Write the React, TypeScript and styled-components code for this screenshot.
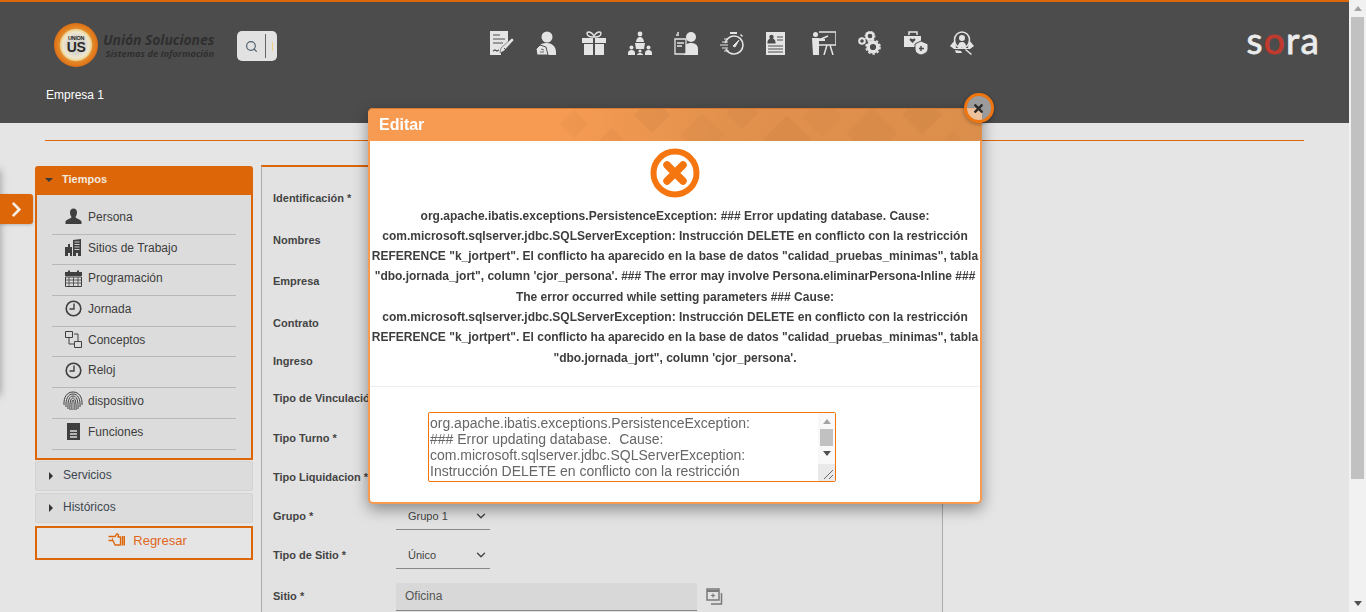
import React from 'react';
import styled, { createGlobalStyle } from 'styled-components';
import { ChevronDown, Search } from 'lucide-react';
import { FaTimes, FaChevronRight } from 'react-icons/fa';

const Global = createGlobalStyle`
  html, body { height: 100%; overflow: hidden; background: #e5e5e5; }
  body { margin: 0; font-family: "Liberation Sans", Arial, sans-serif; }
`;

const Shell = styled.div`
  display: flex;
  height: 612px;
  overflow: hidden;
`;
const Page = styled.div`
  flex: 1;
  min-width: 0;
  position: relative;
  overflow: hidden;
`;
const ScrollTrack = styled.div`
  width: 17px;
  flex: none;
  background: #f1f1f1;
  display: flex;
  flex-direction: column;
  align-items: center;
  justify-content: space-between;
  padding: 6px 0;
  box-sizing: border-box;
  position: relative;
`;
const ArrowUp = styled.span`
  display: block;
  width: 0;
  height: 0;
  border: 4px solid transparent;
  border-top: 0;
  border-bottom: 5px solid #a3a3a3;
`;
const ArrowDown = styled.span`
  display: block;
  width: 0;
  height: 0;
  border: 4px solid transparent;
  border-bottom: 0;
  border-top: 5px solid #505050;
`;
const ScrollThumb = styled.div`
  position: absolute;
  left: 2px;
  right: 2px;
  top: 17px;
  height: 462px;
  background: #c1c1c1;
`;
const Header = styled.header`
  height: 121px;
  background: #4c4c4c;
  border-top: 2px solid #dd6608;
  position: relative;
`;
const HeaderTop = styled.div`
  display: flex;
  align-items: flex-start;
  padding: 21px 29px 0 54px;
`;
const Logo = styled.div`
  display: flex;
  align-items: center;
  width: 183px;
  height: 44px;
  flex: none;
`;
const LogoMark = styled.div`
  width: 44px;
  height: 44px;
  border-radius: 50%;
  flex: none;
  background: radial-gradient(circle closest-side, #d9d5cc 0 40%, #efe6cf 58%, #ecd596 70%, #e48a2a 76%, #dd6f14 100%);
  display: flex;
  flex-direction: column;
  align-items: center;
  justify-content: center;
  color: #2a2a2a;
  font-weight: 700;
  line-height: 1;
`;
const MarkSmall = styled.span`
  font-size: 5.500px;
  letter-spacing: -0.3px;
`;
const MarkBig = styled.span`
  font-size: 14px;
  letter-spacing: -0.5px;
  margin-top: -1px;
`;
const LogoText = styled.div`
  margin-left: 5px;
  font-family: "Open Sans", sans-serif;
  font-style: italic;
  font-weight: 700;
  color: #2f2f2f;
  white-space: nowrap;
  text-align: right;
`;
const LogoTitle = styled.div`
  font-size: 14px;
  line-height: 16px;
  letter-spacing: -0.1px;
`;
const LogoSub = styled.div`
  font-size: 9.300px;
  line-height: 11px;
`;
const SearchBox = styled.div`
  width: 40px;
  height: 30px;
  margin-top: 8px;
  background: #e2e2e2;
  border-radius: 5px;
  display: flex;
  align-items: center;
  padding-left: 8px;
  box-sizing: border-box;
  color: #50606e;
  flex: none;
`;
const SearchDivider = styled.span`
  width: 1px;
  height: 24px;
  background: #666;
  margin-left: 7px;
`;
const SearchCaret = styled.span`
  width: 1px;
  height: 9px;
  background: #edd089;
  margin-left: 6px;
`;
const NavIcons = styled.nav`
  display: flex;
  gap: 22px;
  margin-left: 213px;
  margin-top: 8px;
`;
const NavIcon = styled.svg`
  width: 24px;
  height: 24px;
  fill: #e4e4e4;
  display: block;
  filter: blur(0.3px);
`;
const Sora = styled.div`
  margin-left: auto;
  margin-top: -3px;
  font-family: "Lato", sans-serif;
  font-size: 37px;
  line-height: 40px;
  font-weight: 400;
  letter-spacing: 1.200px;
  color: #ececec;
  -webkit-text-stroke: 0.8px #ececec;
`;
const SoraO = styled.span`
  color: #c23a2e;
  -webkit-text-stroke: 0.8px #c23a2e;
`;
const Company = styled.div`
  position: absolute;
  left: 46px;
  top: 86px;
  color: #fff;
  font-size: 12px;
  line-height: 14px;
`;
const Rule = styled.hr`
  border: 0;
  height: 1px;
  background: #dd6608;
  margin: 17px 45px 0;
`;
const Content = styled.main`
  display: flex;
  align-items: flex-start;
  gap: 8px;
  padding: 24px 0 0 35px;
`;
const Sidebar = styled.aside`
  width: 218px;
  flex: none;
  margin-top: 1px;
`;
const OpenPanel = styled.section`
  border-radius: 3px 3px 0 0;
`;
const OpenHead = styled.div`
  height: 29px;
  background: #dd6608;
  border-radius: 3px 3px 0 0;
  display: flex;
  align-items: center;
  padding: 0 0 3px 10px;
  box-sizing: border-box;
  color: #f4e9df;
  font-size: 11px;
  font-weight: 700;
`;
const CaretDown = styled.span`
  width: 0;
  height: 0;
  border: 4px solid transparent;
  border-top-color: #3a3a3a;
  border-bottom: 0;
  margin: 2px 9px 0 0;
`;
const OpenBody = styled.div`
  background: #dcdcdc;
  border: 2px solid #dd6608;
  border-top: 0;
  padding: 9px 15px 10px;
  height: 265px;
  box-sizing: border-box;
`;
const Item = styled.div`
  height: 30.700px;
  box-sizing: border-box;
  border-bottom: 1px solid #b8b8b8;
  display: flex;
  align-items: center;
  color: #3d3d3d;
  font-size: 12px;
  padding-bottom: 4px;
`;
const ItemIcon = styled.span`
  width: 36px;
  display: flex;
  justify-content: center;
  padding-left: 6px;
  box-sizing: border-box;
  color: #3f3f3f;
`;
const ItemSvg = styled.svg`
  width: 17px;
  height: 17px;
  display: block;
`;
const PrintSvg = styled.svg`
  width: 20px;
  height: 20px;
  display: block;
  fill: none;
  stroke: #3f3f3f;
  stroke-width: 1;
`;
const ClosedPanel = styled.div`
  height: 30px;
  margin-top: ${p => p.$gap}px;
  background: #dcdcdc;
  border: 1px solid #d3d3d3;
  border-radius: 2px;
  box-sizing: border-box;
  display: flex;
  align-items: center;
  padding: 0 0 2px 13px;
  font-size: 12px;
  color: #3d4750;
`;
const CaretRight = styled.span`
  width: 0;
  height: 0;
  border: 4px solid transparent;
  border-left-color: #333;
  border-right: 0;
  margin-right: 10px;
  margin-top: 2px;
`;
const BackButton = styled.div`
  height: 34px;
  margin-top: 3px;
  border: 2px solid #dd6608;
  box-sizing: border-box;
  display: flex;
  align-items: center;
  justify-content: center;
  gap: 8px;
  color: #e0661c;
  font-size: 13px;
  padding: 0 0 6px 7px;
`;
const HandIcon = styled.svg`
  width: 17px;
  height: 14px;
  fill: none;
  stroke: #dd6608;
  stroke-width: 1.300;
`;
const FormPanel = styled.section`
  width: 682px;
  height: 460px;
  background: #e2e2e2;
  border-top: 2px solid #dd6608;
  border-left: 1px solid #aaa;
  border-right: 1px solid #aaa;
  box-sizing: border-box;
  padding: 10px 0 0 11px;
`;
const Row = styled.div`
  height: ${p => p.$h}px;
  display: flex;
  align-items: center;
`;
const Label = styled.label`
  width: 123px;
  flex: none;
  font-size: 11px;
  font-weight: 700;
  color: #444;
  white-space: nowrap;
`;
const SelectBox = styled.div`
  width: 94px;
  height: 27px;
  margin-top: 1px;
  border-bottom: 1px solid #888;
  box-sizing: border-box;
  display: flex;
  align-items: center;
  justify-content: space-between;
  padding: 0 2px 0 12px;
  font-size: 11px;
  color: #444;
`;
const Input = styled.div`
  width: 301px;
  height: 28px;
  margin-top: 1px;
  background: #d8d8d8;
  border-bottom: 1px solid #888;
  box-sizing: border-box;
  display: flex;
  align-items: center;
  padding-left: 9px;
  font-size: 12px;
  color: #555;
  border-radius: 2px 2px 0 0;
`;
const AddIcon = styled.svg`
  width: 17px;
  height: 17px;
  margin-left: 9px;
  fill: none;
  stroke: #7a7a7a;
`;
const SideTab = styled.div`
  position: absolute;
  left: 0;
  top: 194px;
  width: 33px;
  height: 30px;
  background: #dd6608;
  border-radius: 0 3px 3px 0;
  display: flex;
  align-items: center;
  justify-content: center;
  color: #f6efe8;
  box-shadow: 0 1px 3px rgba(0,0,0,.2);
`;
const OffCanvas = styled.div`
  position: absolute;
  left: -200px;
  top: 170px;
  width: 200px;
  height: 225px;
  box-shadow: 0 0 8px rgba(0,0,0,.35);
`;
const Modal = styled.div`
  position: fixed;
  left: 368px;
  top: 108px;
  width: 614px;
  height: 396px;
  background: #fff;
  border: 2px solid #f79b53;
  border-top: 0;
  border-radius: 5px;
  box-sizing: border-box;
  box-shadow: 0 5px 15px rgba(0,0,0,.4);
`;
const ModalHead = styled.div`
  height: 33px;
  margin: 0 -2px;
  background: #f79b53;
  border-top: 1px solid #d97a32;
  border-radius: 5px 5px 0 0;
  box-sizing: border-box;
  position: relative;
  overflow: hidden;
  color: #fff;
  font-size: 16px;
  font-weight: 700;
  line-height: 31px;
  padding-left: 11px;
`;
const HeadPattern = styled.svg`
  position: absolute;
  right: 0;
  top: 0;
  width: 430px;
  height: 32px;
`;
const Close = styled.button`
  position: absolute;
  right: -14px;
  top: -15px;
  width: 30px;
  height: 30px;
  padding: 1px 2px 0 0;
  border-radius: 50%;
  border: 3px solid #f0750f;
  background: rgba(255,255,255,.45);
  box-shadow: 0 1px 4px rgba(0,0,0,.35);
  color: #2a2a2a;
  display: flex;
  align-items: center;
  justify-content: center;
  box-sizing: border-box;
`;
const ErrorIcon = styled.svg`
  display: block;
  width: 50px;
  height: 50px;
  margin: 7px auto 0;
`;
const Message = styled.p`
  margin: 7.500px 0 0;
  font-size: 12px;
  line-height: 20.300px;
  font-weight: 700;
  text-align: center;
  color: #3d3d3d;
`;
const Divider = styled.hr`
  border: 0;
  height: 1px;
  background: #eeeeee;
  margin: 18.500px 0 0;
`;
const DetailsWrap = styled.div`
  position: relative;
  width: 408px;
  height: 70px;
  margin: 25px 0 0 58px;
`;
const Details = styled.textarea`
  display: block;
  width: 100%;
  height: 100%;
  box-sizing: border-box;
  border: 1px solid #f0750f;
  border-radius: 2px;
  padding: 2px 18px 1px 1px;
  font-family: "Liberation Sans", Arial, sans-serif;
  font-size: 14px;
  line-height: 16px;
  color: #666;
  outline: none;
  overflow: hidden;
  resize: none;
`;
const MiniTrack = styled.div`
  position: absolute;
  right: 1px;
  top: 1px;
  bottom: 1px;
  width: 17px;
  background: #f8f8f8;
  display: flex;
  flex-direction: column;
  align-items: center;
  padding-top: 6px;
  box-sizing: border-box;
`;
const MiniThumb = styled.div`
  width: 13px;
  height: 17px;
  margin: 5px 0 5px;
  background: #c1c1c1;
`;
const Grip = styled.svg`
  position: absolute;
  right: 0;
  bottom: 0;
  width: 17px;
  height: 17px;
  background: #e9e9e9;
  stroke: #6a6a6a;
`;

const navIcons = [
  <><path d="M0 0h18v13l-7 7v4H0z"/><path d="M3 4h7M3 8h12M3 12h10M3 20l2-1 2 1 2-1" stroke="#4c4c4c" strokeWidth="1.2" fill="none"/><path d="M22 7l2 2-10 11-4 2 1-5z" stroke="#4c4c4c" strokeWidth=".6"/><path d="M14 17l3 3" stroke="#4c4c4c" strokeWidth="1"/></>,
  <><circle cx="11" cy="6" r="5.500"/><path d="M4 24v-9c0-2 3-3 7-3s9 3 9 9v3z"/><path d="M0 18l4-4 6 2 2 8H1z" stroke="#4c4c4c" strokeWidth="1"/><path d="M5 18l3 1M4 21h4" stroke="#4c4c4c" strokeWidth=".8"/></>,
  <><path d="M0 7h11v5H0zM13 7h11v5H13zM2 13h9v11H2zM13 13h9v11h-9z"/><path d="M11 6C8 6 5 5 5 2c1-2 5-1 7 3 2-4 6-5 7-3 0 3-3 4-6 4z" fill="none" stroke="#e4e4e4" strokeWidth="1.4"/></>,
  <><circle cx="12" cy="3" r="2.4"/><path d="M8 11c0-3 2-5 4-5s4 2 4 5z"/><path d="M7 12h10l-1 6H8z"/><circle cx="3.5" cy="16.5" r="2"/><circle cx="12" cy="20" r="1.6"/><circle cx="20.5" cy="16.5" r="2"/><path d="M0 24v-2c0-2 1.500-3 3.500-3S7 20 7 22v2zM9 24c0-1 1-2 3-2s3 1 3 2zM17 24v-2c0-2 1.500-3 3.500-3s3.500 1 3.500 3v2z"/></>,
  <><circle cx="17" cy="6" r="5"/><path d="M10 24v-6c0-4 3-6 7-6s7 2 7 6v6z"/><path d="M1 8h11v15H1z" fill="#4c4c4c" stroke="#e4e4e4" strokeWidth="1.3"/><path d="M3 12h7M3 15h5M2 4h3M3 2h2" stroke="#e4e4e4" strokeWidth="1.4"/></>,
  <><circle cx="14" cy="14" r="9" fill="none" stroke="#e4e4e4" strokeWidth="1.6" strokeDasharray="24 6 30 0"/><path d="M10 1h7v2h-7zM21 3l2 2-1 1-2-2z"/><path d="M13 15l6-6 -4 7z" stroke="#e4e4e4"/><path d="M0 14h8M2 11h6M2 17h6M4 8h4M4 20h5" stroke="#e4e4e4" strokeWidth="1.2"/></>,
  <><path d="M0 1h19v23H0z"/><circle cx="5.500" cy="6" r="2.200" fill="#4c4c4c"/><path d="M2 12c0-3 1-4 3.500-4S9 9 9 12zM11 6h6M11 9h6M2 15h15M2 18h15M2 21h15" fill="#4c4c4c" stroke="#4c4c4c" strokeWidth="1.200"/></>,
  <><circle cx="3.500" cy="3.500" r="2.500"/><path d="M0 7h6l7 1v2H7v14H1z"/><path d="M7 1h17v13H7" fill="none" stroke="#e4e4e4" strokeWidth="1.500"/><path d="M15 14l-3 10M18 14l3 10M9 8l7-3" stroke="#e4e4e4" strokeWidth="1.500" fill="none"/></>,
  <><g fill="none" stroke="#e4e4e4"><circle cx="12" cy="5" r="3.600" strokeWidth="2.500"/><circle cx="4" cy="10" r="2.800" strokeWidth="2"/><circle cx="15" cy="16" r="4.800" strokeWidth="3.400"/><circle cx="15" cy="16" r="7" strokeWidth="1.600" strokeDasharray="2.500 2"/><circle cx="12" cy="5" r="5" strokeWidth="1" strokeDasharray="1.500 1.500"/></g></>,
  <><path d="M0 5h17v11H0z"/><path d="M5 4V1h8v3" fill="none" stroke="#e4e4e4" strokeWidth="1.500"/><path d="M8.500 12l-3-3c0-2 2-2 3-.8 1-1.200 3-1.200 3 .8z" fill="#4c4c4c"/><path d="M17 10l7 3v5c0 3-3 5-7 6-4-1-6-3-6-6v-5z" stroke="#4c4c4c" strokeWidth="1"/><path d="M17 15v5M15 17.500h5" stroke="#4c4c4c" strokeWidth="1.500"/></>,
  <><ellipse cx="12" cy="9" rx="7.500" ry="8" fill="none" stroke="#e4e4e4" strokeWidth="1.500"/><circle cx="12" cy="7" r="3"/><path d="M8 16c0-4 2-5 4-5s4 1 4 5z"/><path d="M0 15l5-6 1 8h12l1-8 5 6-4 3H4zM5 19l6 1 1 2H6zM16 18l6 5-1 1-6-5z"/></>,
];

const Person = () => <ItemSvg viewBox="0 0 17 17" fill="currentColor"><path d="M5 4.500C5 2 6.500 .5 8.500 .5S12 2 12 4.500c0 2-1 3.500-1.500 4.500-.2 1.500 5.500 2.500 6 4.500V16H.5v-2.500c.5-2 6.200-3 6-4.500C6 8 5 6.500 5 4.500z"/></ItemSvg>;
const Building = () => <ItemSvg viewBox="0 0 17 17" fill="currentColor"><path d="M8 1l8-1v17h-3v-3h-2v3H8zM0 8h3V5h2v3h2v9H5v-3H3v3H0z"/><path d="M9.500 3h5M9.500 5.500h5M9.500 8h5M9.500 10.500h5" stroke="#dcdcdc" strokeWidth=".9"/></ItemSvg>;
const Calendar = () => <ItemSvg viewBox="0 0 17 17" fill="currentColor"><path d="M0 2h3V.5h2V2h7V.5h2V2h3v4H0z"/><path d="M.5 7h16v9.500H.5z" fill="none" stroke="currentColor"/><path d="M4 7v10M8.500 7v10M13 7v10M0 10h17M0 13h17" stroke="currentColor" strokeWidth=".8"/></ItemSvg>;
const Clock = () => <ItemSvg viewBox="0 0 17 17" fill="none" stroke="currentColor"><circle cx="8.500" cy="8.500" r="7.300" strokeWidth="1.600"/><path d="M9 3.500v5.500H4.500" strokeWidth="1.400"/></ItemSvg>;
const Concepts = () => <ItemSvg viewBox="0 0 17 17" fill="none" stroke="currentColor"><path d="M.5.500h7v6h-7zM9.500 10.500h7v6h-7zM9 3h4v7M4 7v6h5" strokeWidth="1"/></ItemSvg>;
const Notebook = () => <ItemSvg viewBox="0 0 17 17" fill="currentColor"><path d="M2 0h13v17H2z"/><path d="M5 8h7M5 11h7M5 14h7" stroke="#dcdcdc" strokeWidth="1.300"/></ItemSvg>;
const FingerprintMark = () => (
  <PrintSvg viewBox="0 0 20 20">
    <path d="M1 14C.5 6 4 1 10 1s9.500 5 9 13" />
    <path d="M3 16C2.500 8 5 3 10 3s7.500 5 7 13" />
    <path d="M5 18C4.500 9 6.500 5 10 5s5.500 4 5 13" />
    <path d="M7 19C6.500 11 8 7 10 7s3.500 4 3 12" />
    <path d="M9 19c-.300-6 0-10 1-10s1.500 4 1 10" />
  </PrintSvg>
);

const items: [string, React.ReactNode][] = [
  ['Persona', <Person />],
  ['Sitios de Trabajo', <Building />],
  ['Programación', <Calendar />],
  ['Jornada', <Clock />],
  ['Conceptos', <Concepts />],
  ['Reloj', <Clock />],
  ['dispositivo', <FingerprintMark />],
  ['Funciones', <Notebook />],
];

const rows: [string, number, React.ReactNode?][] = [
  ['Identificación *', 42],
  ['Nombres', 42],
  ['Empresa', 40],
  ['Contrato', 44],
  ['Ingreso', 32],
  ['Tipo de Vinculación *', 42],
  ['Tipo Turno *', 38],
  ['Tipo Liquidacion *', 40],
  ['Grupo *', 38, <SelectBox>Grupo 1<ChevronDown size={14} strokeWidth={2.4} /></SelectBox>],
  ['Tipo de Sitio *', 40, <SelectBox>Único<ChevronDown size={14} strokeWidth={2.4} /></SelectBox>],
  ['Sitio *', 42, <><Input>Oficina</Input><AddIcon viewBox="0 0 17 17"><path d="M1 1h12v11H1z" strokeWidth="1.500"/><path d="M1 3h12" strokeWidth="2"/><path d="M5 7.500h4M7 5.500v4" strokeWidth="1.200"/><path d="M15.500 5v11H5" strokeWidth="1.500"/></AddIcon></>],
];

const diamonds = [
  [22, 15, 14], [60, 33, 14], [100, 6, 18], [150, 26, 22], [190, 4, 16], [235, 30, 24], [270, 8, 20], [320, 24, 26], [370, 6, 20], [400, 34, 12],
];

const msg = `org.apache.ibatis.exceptions.PersistenceException: ### Error updating database. Cause: com.microsoft.sqlserver.jdbc.SQLServerException: Instrucción DELETE en conflicto con la restricción REFERENCE "k_jortpert". El conflicto ha aparecido en la base de datos "calidad_pruebas_minimas", tabla "dbo.jornada_jort", column 'cjor_persona'. ### The error may involve Persona.eliminarPersona-Inline ### The error occurred while setting parameters ### Cause: com.microsoft.sqlserver.jdbc.SQLServerException: Instrucción DELETE en conflicto con la restricción REFERENCE "k_jortpert". El conflicto ha aparecido en la base de datos "calidad_pruebas_minimas", tabla "dbo.jornada_jort", column 'cjor_persona'.`;

const detail = `org.apache.ibatis.exceptions.PersistenceException: 
### Error updating database.  Cause: 
com.microsoft.sqlserver.jdbc.SQLServerException: 
Instrucción DELETE en conflicto con la restricción 
REFERENCE "k_jortpert". El conflicto ha aparecido en la base de datos "calidad_pruebas_minimas", tabla "dbo.jornada_jort", column 'cjor_persona'.
### The error may involve Persona.eliminarPersona-Inline
### The error occurred while setting parameters`;

export default function App() {
  return (
    <Shell>
      <Global />
      <Page>
        <Header>
          <HeaderTop>
            <Logo>
              <LogoMark><MarkSmall>UNION</MarkSmall><MarkBig>US</MarkBig></LogoMark>
              <LogoText>
                <LogoTitle>Unión Soluciones</LogoTitle>
                <LogoSub>Sistemas de Información</LogoSub>
              </LogoText>
            </Logo>
            <SearchBox>
              <Search size={13} strokeWidth={2.2} />
              <SearchDivider />
              <SearchCaret />
            </SearchBox>
            <NavIcons>
              {navIcons.map((ic, i) => <NavIcon key={i} viewBox="0 0 24 24">{ic}</NavIcon>)}
            </NavIcons>
            <Sora>s<SoraO>o</SoraO>ra</Sora>
          </HeaderTop>
          <Company>Empresa 1</Company>
        </Header>
        <Rule />
        <Content>
          <Sidebar>
            <OpenPanel>
              <OpenHead><CaretDown />Tiempos</OpenHead>
              <OpenBody>
                {items.map(([t, ic]) => <Item key={t}><ItemIcon>{ic}</ItemIcon>{t}</Item>)}
              </OpenBody>
            </OpenPanel>
            <ClosedPanel $gap={1}><CaretRight />Servicios</ClosedPanel>
            <ClosedPanel $gap={2}><CaretRight />Históricos</ClosedPanel>
            <BackButton>
              <HandIcon viewBox="0 0 17 14">
                <path d="M.5 3.500h6.500l2-2.800 1.500.8-.5 2.500h2.500v8H7l-2-4.500H.5" strokeLinejoin="round" />
                <path d="M5 6h-1" />
                <path d="M14.500 3v9.500M16.500 3v9.500" strokeWidth="1.600" />
              </HandIcon>
              Regresar
            </BackButton>
          </Sidebar>
          <FormPanel>
            {rows.map(([l, h, c]) => <Row key={l} $h={h}><Label>{l}</Label>{c}</Row>)}
          </FormPanel>
        </Content>
        <OffCanvas />
        <SideTab><FaChevronRight size={17} /></SideTab>
        <Modal>
          <ModalHead>
            <HeadPattern viewBox="0 0 430 32">
              <defs>
                <linearGradient id="headFade" x1="0" x2="1" y1="0" y2="0">
                  <stop offset="0" stopColor="#c98546" stopOpacity="0" />
                  <stop offset=".4" stopColor="#c98546" stopOpacity=".45" />
                  <stop offset="1" stopColor="#c98546" stopOpacity=".6" />
                </linearGradient>
              </defs>
              <rect x="0" y="0" width="430" height="32" fill="url(#headFade)" />
              {diamonds.map(([x, y, r], i) => (
                <polygon key={i} points={`${x},${y - r} ${x + r},${y} ${x},${y + r} ${x - r},${y}`} fill="#b9763c" opacity={0.1 + (i % 3) * 0.03} />
              ))}
            </HeadPattern>
            Editar
          </ModalHead>
          <Close aria-label="Cerrar"><FaTimes size={13} /></Close>
          <ErrorIcon viewBox="0 0 50 50">
            <circle cx="25" cy="25" r="21.500" fill="none" stroke="#f5760e" strokeWidth="6" />
            <path d="M17 17l16 16M33 17L17 33" stroke="#f5760e" strokeWidth="7.500" strokeLinecap="round" />
          </ErrorIcon>
          <Message>{msg}</Message>
          <Divider />
          <DetailsWrap>
            <Details readOnly defaultValue={detail} />
            <MiniTrack>
              <ArrowUp />
              <MiniThumb />
              <ArrowDown />
              <Grip viewBox="0 0 17 17"><path d="M15 6L6 15M15 11l-4 4" strokeWidth="1" /></Grip>
            </MiniTrack>
          </DetailsWrap>
        </Modal>
      </Page>
      <ScrollTrack>
        <ArrowUp />
        <ScrollThumb />
        <ArrowDown />
      </ScrollTrack>
    </Shell>
  );
}
